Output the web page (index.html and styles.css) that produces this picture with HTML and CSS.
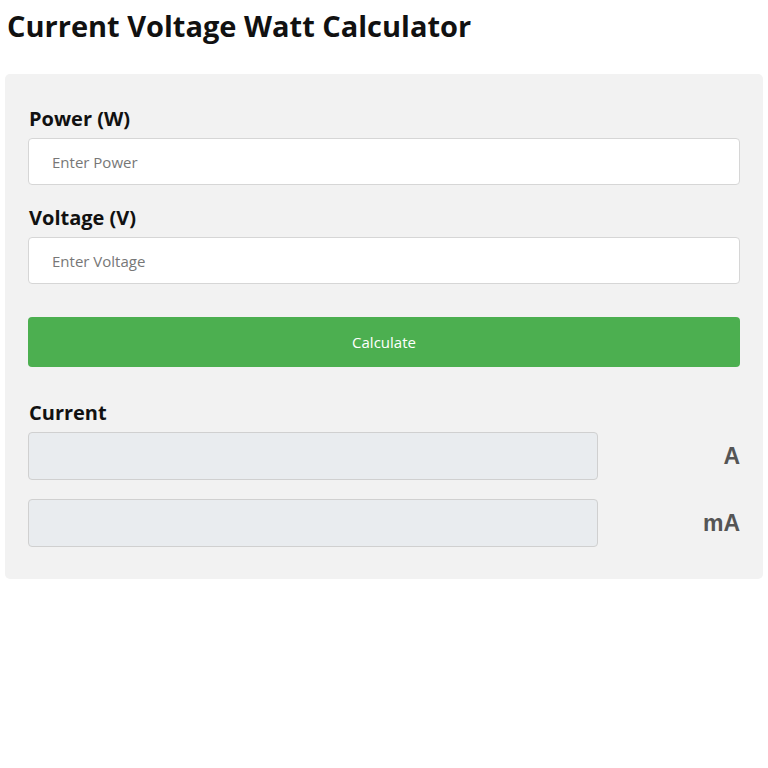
FILE: index.html
```html
<!DOCTYPE html>
<html>
<head>
  <meta charset="UTF-8" />
  <meta name="viewport" content="width=device-width, initial-scale=1.0"/>
  <title>Current Voltage Watt Calculator</title>
  <link rel="stylesheet" href="styles.css">
</head>
<body>

  <h1>Current Voltage Watt Calculator</h1>

  <form id="calcForm" class="calc">
    <div class="field">
      <label for="power">Power (W)</label>
      <input type="text" id="power" placeholder="Enter Power">
    </div>
    <div class="field">
      <label for="voltage">Voltage (V)</label>
      <input type="text" id="voltage" placeholder="Enter Voltage">
    </div>
    <button type="submit">Calculate</button>

    <div class="result">
      <label>Current</label>
      <div class="out-row">
        <input type="text" id="amps" readonly>
        <span class="unit">A</span>
      </div>
      <div class="out-row">
        <input type="text" id="milliamps" readonly>
        <span class="unit">mA</span>
      </div>
    </div>
  </form>

</body>
</html>
```

FILE: styles.css
```css
body {
  font-family: "Open Sans", Arial, sans-serif;
  background: #fff;
  margin: 0;
  padding: 0 5px;
  color: #111;
}

h1 {
  font-size: 29px;
  font-weight: bold;
  margin: 0;
  padding: 6px 2px 0;
  line-height: 40px;
  height: 68px;
}

.calc {
  background: #f2f2f2;
  border-radius: 5px;
  padding: 32px 23px 32px;
}

.field {
  margin-bottom: 20px;
}

label {
  display: block;
  font-weight: bold;
  font-size: 20px;
  line-height: 26px;
  margin-bottom: 6px;
  padding-left: 1px;
}

input {
  display: block;
  width: 100%;
  height: 47px;
  padding: 0 23px;
  box-sizing: border-box;
  border: 1px solid #d6d6d6;
  border-radius: 4px;
  background: #fff;
  font-family: "Open Sans", Arial, sans-serif;
  font-size: 15px;
}

input::placeholder {
  color: #777;
}

button {
  display: block;
  width: 100%;
  height: 50px;
  margin-top: 33px;
  background-color: #4caf50;
  color: #fff;
  border: none;
  border-radius: 4px;
  font-family: "Open Sans", Arial, sans-serif;
  font-size: 15px;
  cursor: pointer;
}

.result {
  margin-top: 33px;
}

.result label {
  margin-bottom: 6px;
}

.out-row {
  display: flex;
  align-items: center;
  margin-bottom: 19px;
}

.out-row:last-child {
  margin-bottom: 0;
}

.out-row input {
  width: 570px;
  height: 48px;
  background: #e9ecef;
  border-color: #d0d0d0;
}

.unit {
  flex: 1;
  text-align: right;
  font-family: "Liberation Sans", Arial, sans-serif;
  font-weight: bold;
  font-size: 23px;
  color: #555;
}
```
